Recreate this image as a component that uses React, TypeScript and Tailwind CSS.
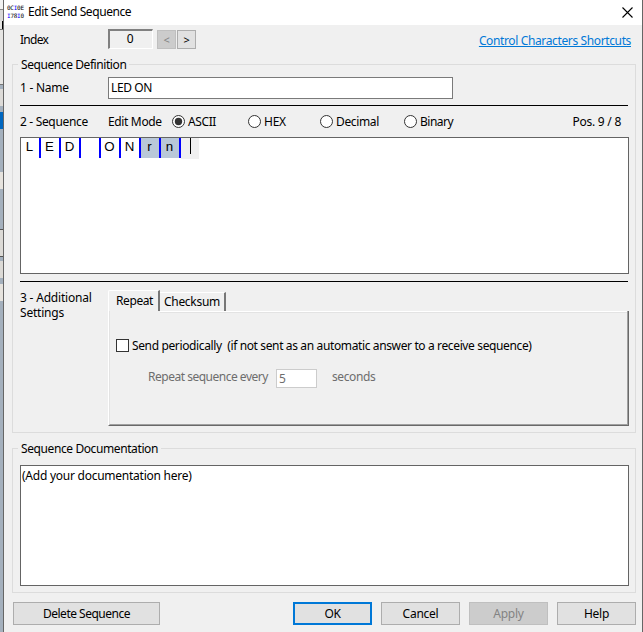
import type { ReactNode } from "react";

type Cell = { ch: string; control?: boolean };

const cells: Cell[] = [
  { ch: "L" },
  { ch: "E" },
  { ch: "D" },
  { ch: "" },
  { ch: "O" },
  { ch: "N" },
  { ch: "r", control: true },
  { ch: "n", control: true },
];

function Radio({ label, checked, className }: { label: string; checked?: boolean; className: string }) {
  return (
    <label className={`flex items-center ${className}`}>
      <svg width="13" height="13" viewBox="0 0 13 13" className="mr-[3px] shrink-0">
        <circle cx="6.5" cy="6.5" r="6" fill="#fff" stroke="#333" />
        {checked && <circle cx="6.5" cy="6.5" r="3.7" fill="#333" />}
      </svg>
      <span>{label}</span>
    </label>
  );
}

function Button({ children, className }: { children: ReactNode; className: string }) {
  return <button className={`h-[23px] shrink-0 leading-[20px] ${className}`}>{children}</button>;
}

function BackgroundStrip() {
  return (
    <div className="flex w-[3px] shrink-0 flex-col bg-[#a4b0bd]">
      <div className="h-[9px] bg-[#f2f2f2]" />
      <div className="h-[12px] border-t border-[#888] bg-[#d9d9d9]" />
      <div className="flex h-[8px] justify-end bg-[#e6e5e3]">
        <div className="w-px bg-black" />
      </div>
      <div className="h-[56px] border-y border-y-[#777] bg-[#e6e5e3]" />
      <div className="mt-[4px] h-[17px] bg-[#dddbd8]" />
      <div className="mt-[6px] h-[17px] bg-[#0067c0]" />
      <div className="mt-[43px] h-[17px] bg-[#e6e3de]" />
      <div className="mt-[40px] h-[28px] border-y border-[#555] bg-[#dcdad6]" />
      <div className="mt-[4px] h-[17px] bg-[#dcdad6]" />
      <div className="mt-[6px] h-[17px] bg-[#e6e3de]" />
    </div>
  );
}

export default function App() {
  return (
    <div className="flex h-[632px] w-[643px] overflow-hidden bg-[#f0f0f0] font-['Noto_Sans',sans-serif] text-[12px] leading-[15px] tracking-[-0.25px] whitespace-pre text-black">
      <BackgroundStrip />
      <main className="flex w-[640px] shrink-0 flex-col border-x border-[#666]">
        <header className="flex h-[25px] shrink-0 items-center bg-white">
          <div className="ml-[3px] w-[17px] pb-[2px] font-['DejaVu_Sans_Mono',monospace] text-[6px] leading-[7.5px] tracking-[-0.25px]">
            <div>0C<span className="text-[#0000ff]">I</span>0E</div>
            <div><span className="text-[#0000ff]">I</span>78<span className="text-[#0000ff]">I</span>0</div>
          </div>
          <h1 className="ml-[4px] pb-[2px] tracking-[-0.42px]">Edit Send Sequence</h1>
          <svg width="11" height="11" viewBox="0 0 11 11" className="mr-[9px] ml-auto">
            <path d="M.5.5l10 10M10.5.5l-10 10" stroke="#000" strokeWidth="1.1" />
          </svg>
        </header>

        <div className="flex h-[31px] shrink-0 items-start pl-[16px]">
          <span className="mt-[7px] w-[88px] tracking-[-0.7px]">Index</span>
          <div className="mt-[4px] h-[20px] w-[45px] border-t-2 border-r border-b border-l-2 border-t-[#808080] border-r-white border-b-white border-l-[#808080] pr-[2px] text-center leading-[16px]">0</div>
          <button className="mt-[5px] ml-[4px] h-[19px] w-[19px] border border-[#bfbfbf] bg-[#ccc] text-[11px] leading-[18px] text-[#838383]">&lt;</button>
          <button className="mt-[5px] ml-[1px] h-[19px] w-[19px] border border-[#adadad] bg-[#e1e1e1] text-[11px] leading-[18px]">&gt;</button>
          <a className="mt-[8px] mr-[11px] ml-auto tracking-[-0.37px] text-[#0078d7] underline underline-offset-1">Control Characters Shortcuts</a>
        </div>

        <fieldset className="ml-[8px] h-[377px] w-[624px] shrink-0 border border-[#dcdcdc] pl-[7px]">
          <legend className="ml-[-2px] h-[16px] px-[3px] leading-[17px] tracking-[-0.42px]">Sequence Definition</legend>
          <div className="flex pt-[5px]">
            <span className="w-[88px] pt-[3px]">1 - Name</span>
            <div className="h-[22px] w-[345px] border border-[#7a7a7a] bg-white pl-[2px] leading-[20px] tracking-[-0.4px]">LED ON</div>
          </div>
          <div className="mt-[6px] h-px w-[608px] bg-black" />
          <div className="flex h-[31px] items-center">
            <span className="w-[88px] tracking-[-0.33px]">2 - Sequence</span>
            <span className="w-[64px] tracking-[-0.35px]">Edit Mode</span>
            <Radio label="ASCII" checked className="w-[76px] tracking-[-0.4px]" />
            <Radio label="HEX" className="w-[72px]" />
            <Radio label="Decimal" className="w-[84px] tracking-[-0.35px]" />
            <Radio label="Binary" className="w-[70px] tracking-[-0.5px]" />
            <span className="mr-[14px] ml-auto">Pos. 9 / 8</span>
          </div>
          <div className="flex h-[137px] w-[609px] border border-[#646464] bg-white font-['Liberation_Sans',sans-serif] text-[13.3px] tracking-normal">
            {cells.map((cell, i) => (
              <div key={i} className={`h-[20px] w-[20px] border-r-2 border-[#0000ff] pr-px text-center leading-[17px] ${cell.control ? "bg-[#b9c8d8]" : ""}`}>
                {cell.ch}
              </div>
            ))}
            <div className="h-[21px] w-[18px] bg-[#f0f0f0] pl-[9px]">
              <div className="h-[16px] w-px bg-black" />
            </div>
          </div>
          <div className="mt-[7px] h-px w-[608px] bg-black" />
          <div className="flex">
            <div className="w-[88px] pt-[8px] tracking-[-0.2px]">{"3 - Additional\nSettings"}</div>
            <div className="w-[521px] pt-[8px]">
              <div className="flex h-[21px] items-end">
                <div className="h-[21px] w-[52px] rounded-tl-[2px] border-t border-r-2 border-l border-t-white border-r-[#777] border-l-white pl-[7px] leading-[19px] tracking-[-0.4px]">Repeat</div>
                <div className="h-[19px] w-[66px] border-t border-r-2 border-t-white border-r-[#777] pl-[4px] leading-[18px] tracking-[-0.3px]">Checksum</div>
              </div>
              <div className="h-[115px] border-r border-b border-l border-r-[#696969] border-b-[#696969] border-l-white">
                <div className="h-full border-r border-b border-l border-r-[#a0a0a0] border-b-[#a0a0a0] border-l-[#e3e3e3]">
                  <div className="ml-[50px] h-[2px] border-b border-[#e3e3e3] bg-white" />
                  <div className="flex items-center pt-[25px] pl-[6px]">
                    <div className="mr-[3px] h-[13px] w-[13px] border border-[#333] bg-white" />
                    <span className="tracking-[-0.37px]">Send periodically  (if not sent as an automatic answer to a receive sequence)</span>
                  </div>
                  <div className="flex items-start pt-[16px] pl-[38px] text-[#6d6d6d]">
                    <span className="w-[128px] tracking-[-0.49px]">Repeat sequence every</span>
                    <div className="h-[19px] w-[41px] border border-[#ccc] bg-white pl-[2px] leading-[18px]">5</div>
                    <span className="ml-[15px] tracking-[-0.4px]">seconds</span>
                  </div>
                </div>
              </div>
            </div>
          </div>
        </fieldset>

        <fieldset className="mt-[7px] ml-[8px] h-[153px] w-[624px] shrink-0 border border-[#dcdcdc] pl-[7px]">
          <legend className="ml-[-2px] h-[16px] px-[3px] leading-[17px] tracking-[-0.4px]">Sequence Documentation</legend>
          <div className="mt-[9px] h-[121px] w-[609px] border border-[#646464] bg-white pt-[2px] pl-px">(Add your documentation here)</div>
        </fieldset>

        <footer className="mt-[9px] flex pl-[9px]">
          <Button className="w-[147px] border border-[#adadad] bg-[#e1e1e1] tracking-[-0.5px]">Delete Sequence</Button>
          <Button className="ml-[133px] w-[79px] border-2 border-[#0078d7] bg-[#e1e1e1] tracking-[-0.5px]">OK</Button>
          <Button className="ml-[9px] w-[79px] border border-[#adadad] bg-[#e1e1e1]">Cancel</Button>
          <Button className="ml-[9px] w-[79px] border border-[#bfbfbf] bg-[#ccc] text-[#838383]">Apply</Button>
          <Button className="ml-[9px] w-[79px] border border-[#adadad] bg-[#e1e1e1]">Help</Button>
        </footer>
      </main>
    </div>
  );
}
